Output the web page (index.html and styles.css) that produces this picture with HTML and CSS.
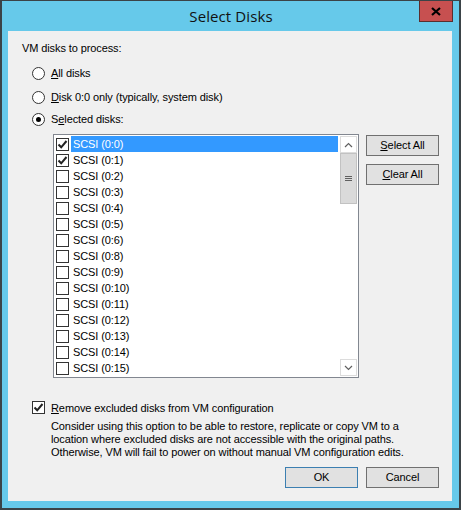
FILE: index.html
```html
<!DOCTYPE html>
<html>
<head>
<meta charset="utf-8">
<link rel="stylesheet" href="styles.css">
</head>
<body>
<div class="window">
  <div class="titlebar">
    <span class="title">Select Disks</span>
    <div class="close"><svg width="10" height="9" viewBox="0 0 10 9"><path d="M1 1 L9 8 M9 1 L1 8" stroke="#000" stroke-width="2.2" fill="none"/></svg></div>
  </div>
  <div class="content">
    <div class="heading">VM disks to process:</div>
    <div class="radios">
      <div class="radio-row r1"><span class="radio"></span><span><u>A</u>ll disks</span></div>
      <div class="radio-row r2"><span class="radio"></span><span><u>D</u>isk 0:0 only (typically, system disk)</span></div>
      <div class="radio-row r3"><span class="radio checked"></span><span>S<u>e</u>lected disks:</span></div>
    </div>
    <div class="list-area">
      <div class="listbox">
        <div class="items">
          <div class="item"><span class="cb on"><svg width="11" height="11" viewBox="0 0 11 11"><path d="M1.5 5.5 L4.2 8.3 L9.5 2" stroke="#222" stroke-width="2" fill="none"/></svg></span><span class="label sel">SCSI (0:0)</span></div>
          <div class="item"><span class="cb on"><svg width="11" height="11" viewBox="0 0 11 11"><path d="M1.5 5.5 L4.2 8.3 L9.5 2" stroke="#222" stroke-width="2" fill="none"/></svg></span><span class="label">SCSI (0:1)</span></div>
          <div class="item"><span class="cb"></span><span class="label">SCSI (0:2)</span></div>
          <div class="item"><span class="cb"></span><span class="label">SCSI (0:3)</span></div>
          <div class="item"><span class="cb"></span><span class="label">SCSI (0:4)</span></div>
          <div class="item"><span class="cb"></span><span class="label">SCSI (0:5)</span></div>
          <div class="item"><span class="cb"></span><span class="label">SCSI (0:6)</span></div>
          <div class="item"><span class="cb"></span><span class="label">SCSI (0:8)</span></div>
          <div class="item"><span class="cb"></span><span class="label">SCSI (0:9)</span></div>
          <div class="item"><span class="cb"></span><span class="label">SCSI (0:10)</span></div>
          <div class="item"><span class="cb"></span><span class="label">SCSI (0:11)</span></div>
          <div class="item"><span class="cb"></span><span class="label">SCSI (0:12)</span></div>
          <div class="item"><span class="cb"></span><span class="label">SCSI (0:13)</span></div>
          <div class="item"><span class="cb"></span><span class="label">SCSI (0:14)</span></div>
          <div class="item"><span class="cb"></span><span class="label">SCSI (0:15)</span></div>
        </div>
        <div class="scrollbar">
          <div class="arrow"><svg width="9" height="6" viewBox="0 0 9 6"><path d="M1 5 L4.5 1.5 L8 5" stroke="#606060" stroke-width="1.2" fill="none"/></svg></div>
          <div class="thumb"><span class="grip"></span><span class="grip"></span><span class="grip"></span></div>
          <div class="track"></div>
          <div class="arrow"><svg width="9" height="6" viewBox="0 0 9 6"><path d="M1 1 L4.5 4.5 L8 1" stroke="#606060" stroke-width="1.2" fill="none"/></svg></div>
        </div>
      </div>
      <div class="side-buttons">
        <div class="btn"><u>S</u>elect All</div>
        <div class="btn"><u>C</u>lear All</div>
      </div>
    </div>
    <div class="remove-row"><span class="cb on"><svg width="11" height="11" viewBox="0 0 11 11"><path d="M1.5 5.5 L4.2 8.3 L9.5 2" stroke="#222" stroke-width="2" fill="none"/></svg></span><span><u>R</u>emove excluded disks from VM configuration</span></div>
    <div class="desc">Consider using this option to be able to restore, replicate or copy VM to a<br>location where excluded disks are not accessible with the original paths.<br>Otherwise, VM will fail to power on without manual VM configuration edits.</div>
    <div class="footer">
      <div class="btn default">OK</div>
      <div class="btn">Cancel</div>
    </div>
  </div>
</div>
</body>
</html>
```

FILE: styles.css
```css
* { box-sizing: border-box; }
html, body { margin: 0; padding: 0; }
body { width: 461px; height: 510px; overflow: hidden; font-family: "Liberation Sans", Arial, sans-serif; font-size: 11px; letter-spacing: -0.1px; color: #000; }
u { text-decoration: underline; text-underline-offset: 1px; }

.window {
  width: 461px; height: 510px;
  background: #66c9ea;
  border: 2px solid #3b4347;
  border-top-width: 1px;
  padding: 0 7px 7px 6px;
  display: flex; flex-direction: column;
  position: relative;
}
.titlebar {
  height: 30px; flex: none;
  display: flex; align-items: center; justify-content: center;
}
.title { font-family: "Open Sans", "Noto Sans", sans-serif; font-size: 15px; color: #111; letter-spacing: 0.1px; margin-left: 2px; }
.close {
  position: absolute; top: 0; right: 6px;
  width: 34px; height: 21px;
  background: #c75050;
  border: 1px solid #5a2e2e; border-top: none;
  display: flex; align-items: center; justify-content: center;
}

.content {
  flex: 1;
  background: #f0f0f0;
  padding: 10px 13px 0 14px;
  display: flex; flex-direction: column;
}
.heading { height: 15px; line-height: 15px; }
.radios { margin-top: 5px; padding-left: 10px; }
.radio-row { display: flex; align-items: center; gap: 6px; }
.r1 { height: 24px; }
.r2 { height: 24px; }
.r3 { height: 20px; }
.radio {
  width: 13px; height: 13px; border-radius: 50%;
  border: 1px solid #333; background: #fff;
  display: flex; align-items: center; justify-content: center; flex: none;
}
.radio.checked::after { content: ""; width: 5px; height: 5px; border-radius: 50%; background: #000; }

.list-area { margin-top: 5px; display: flex; gap: 7px; }
.listbox {
  margin-left: 31px;
  width: 306px; height: 244px;
  border: 1px solid #828790;
  background: #fff;
  display: flex;
  padding: 1px 1px 1px 0;
}
.items { flex: 1; padding-left: 2px; }
.item { height: 16px; display: flex; align-items: center; }
.cb {
  width: 13px; height: 13px; flex: none;
  border: 1px solid #333; background: #fff;
  display: flex; align-items: center; justify-content: center;
}
.label { margin-left: 2px; height: 16px; line-height: 16px; padding-left: 2px; flex: 1; margin-right: 2px; }
.label.sel { background: #3399ff; color: #fff; }

.scrollbar { width: 17px; display: flex; flex-direction: column; }
.arrow {
  height: 17px; border: 1px solid #dcdcdc; background: #fff;
  display: flex; align-items: center; justify-content: center;
}
.thumb {
  height: 51px; background: #dadada; border: 1px solid #c2c2c2;
  display: flex; flex-direction: column; align-items: center; justify-content: center; gap: 1px;
}
.grip { width: 7px; height: 1px; background: #606060; }
.track { flex: 1; background: #fff; }

.side-buttons { display: flex; flex-direction: column; gap: 8px; padding-top: 1px; }
.btn {
  width: 73px; height: 21px;
  background: #e1e1e1; border: 1px solid #707070;
  display: flex; align-items: center; justify-content: center;
  line-height: 1;
}
.btn.default { border-color: #3c7fb1; }

.remove-row { margin-top: 22px; margin-left: 10px; height: 15px; display: flex; align-items: center; gap: 6px; }
.desc { margin-top: 5px; margin-left: 29px; line-height: 13px; white-space: nowrap; }
.footer { margin-top: 8px; display: flex; justify-content: flex-end; gap: 8px; }
```
